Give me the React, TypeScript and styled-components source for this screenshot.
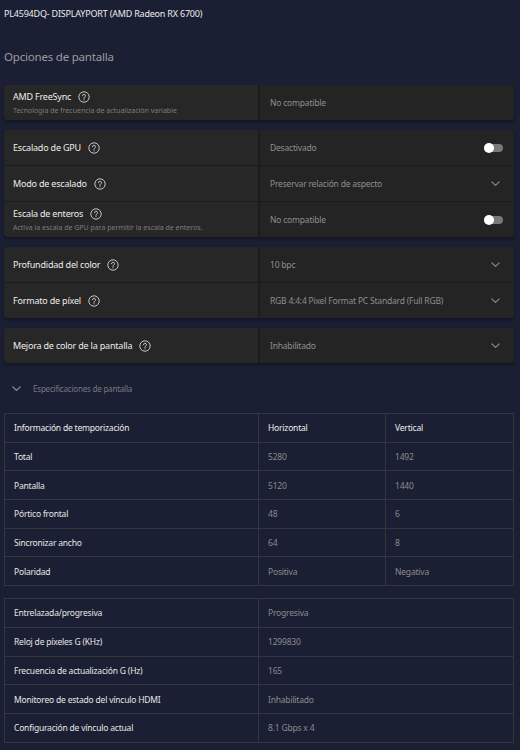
import React from 'react';
import styled, { createGlobalStyle } from 'styled-components';

const Global = createGlobalStyle`
	html, body {
		margin: 0;
		padding: 0;
		background: #1b1f33;
	}
	body {
		font-family: 'Noto Sans', 'Open Sans', sans-serif;
		letter-spacing: -0.2px;
		color: #e4e4e4;
	}
`;

const Page = styled.div`
	width: 520px;
	height: 750px;
	box-sizing: border-box;
	padding: 6px 6px 0 4px;
	background: #1b1f33;
	overflow: hidden;
`;
const Title = styled.h1`
	margin: 0;
	font-size: 9px;
	font-weight: 400;
	line-height: 16px;
	color: #ececec;
`;
const Heading = styled.h2`
	margin: 25px 0 0;
	font-size: 11.5px;
	font-weight: 400;
	line-height: 20px;
	color: #9b9b9f;
`;
const Card = styled.div<{ $top?: number }>`
	margin-top: ${({ $top }) => $top ?? 10}px;
	display: flex;
	flex-direction: column;
	gap: 1px;
	background: #1c1c1c;
	border-radius: 3px;
	overflow: hidden;
	box-shadow: 0 2px 3px rgba(0, 0, 0, 0.35);
`;
const Row = styled.div<{ $h?: number }>`
	display: grid;
	grid-template-columns: 254px 1fr;
	gap: 2px;
	height: ${({ $h }) => $h ?? 35}px;
`;
const Label = styled.div`
	display: flex;
	flex-direction: column;
	justify-content: center;
	padding-left: 9px;
	background: #272727;
	strong {
		display: flex;
		align-items: center;
		gap: 7px;
		font-size: 9px;
		font-weight: 400;
		color: #ececec;
		line-height: 14px;
	}
	small {
		margin-top: 2px;
		font-size: 7px;
		letter-spacing: 0;
		color: #7c7c7c;
		line-height: 9px;
	}
`;
const Value = styled.div`
	display: flex;
	align-items: center;
	justify-content: space-between;
	padding: 0 14px 0 10px;
	background: #242424;
	font-size: 8.5px;
	color: #8e8e8e;
`;
const Toggle = styled.span`
	position: relative;
	width: 19px;
	height: 8px;
	margin-right: -3px;
	border-radius: 4px;
	background: #7a7a7a;
	&:before {
		content: '';
		position: absolute;
		left: 0;
		top: -1px;
		width: 10px;
		height: 10px;
		border-radius: 50%;
		background: #ffffff;
	}
`;
const Help = () => (
	<svg width="12" height="12" viewBox="0 0 12 12" fill="none">
		<circle cx="6" cy="6" r="5.2" stroke="#d6d6d6" strokeWidth="0.9" />
		<path
			d="M4.5 4.7a1.5 1.5 0 1 1 2.1 1.4c-.4.2-.6.5-.6.9v.4"
			stroke="#d6d6d6"
			strokeWidth="0.9"
			strokeLinecap="round"
		/>
		<circle cx="6" cy="8.7" r="0.55" fill="#d6d6d6" />
	</svg>
);
const Chevron = ({ color = '#8e8e8e' }: { color?: string }) => (
	<svg width="9" height="5" viewBox="0 0 9 5" fill="none">
		<path d="M0.8 0.8l3.7 3.5 3.7-3.5" stroke={color} strokeWidth="1.1" strokeLinecap="round" strokeLinejoin="round" />
	</svg>
);
const Specs = styled.div`
	margin-top: 15px;
	display: flex;
	align-items: center;
	gap: 12px;
	padding-left: 8px;
	height: 20px;
	font-size: 8px;
	color: #77787f;
`;
const Table = styled.table<{ $top?: number }>`
	width: 100%;
	margin-top: ${({ $top }) => $top}px;
	border-collapse: collapse;
	td {
		height: 27.7px;
		padding: 0 0 0 9px;
		border: 1px solid #35363b;
		font-size: 8.5px;
		color: #8a8a8e;
	}
	td:first-child {
		color: #e6e6e6;
	}
	tr.head td {
		color: #ececec;
	}
`;

const timing = [
	['Total', '5280', '1492'],
	['Pantalla', '5120', '1440'],
	['Pórtico frontal', '48', '6'],
	['Sincronizar ancho', '64', '8'],
	['Polaridad', 'Positiva', 'Negativa'],
];
const links = [
	['Entrelazada/progresiva', 'Progresiva'],
	['Reloj de píxeles G (KHz)', '1299830'],
	['Frecuencia de actualización G (Hz)', '165'],
	['Monitoreo de estado del vínculo HDMI', 'Inhabilitado'],
	['Configuración de vínculo actual', '8.1 Gbps x 4'],
];

export default function App() {
	return (
		<Page>
			<Global />
			<Title>PL4594DQ- DISPLAYPORT (AMD Radeon RX 6700)</Title>
			<Heading>Opciones de pantalla</Heading>

			<Card $top={18}>
				<Row>
					<Label>
						<strong>AMD FreeSync <Help /></strong>
						<small>Tecnología de frecuencia de actualización variable</small>
					</Label>
					<Value>No compatible</Value>
				</Row>
			</Card>

			<Card>
				<Row>
					<Label>
						<strong>Escalado de GPU <Help /></strong>
					</Label>
					<Value>
						Desactivado <Toggle />
					</Value>
				</Row>
				<Row>
					<Label>
						<strong>Modo de escalado <Help /></strong>
					</Label>
					<Value>
						Preservar relación de aspecto <Chevron />
					</Value>
				</Row>
				<Row>
					<Label>
						<strong>Escala de enteros <Help /></strong>
						<small>Activa la escala de GPU para permitir la escala de enteros.</small>
					</Label>
					<Value>
						No compatible <Toggle />
					</Value>
				</Row>
			</Card>

			<Card>
				<Row>
					<Label>
						<strong>Profundidad del color <Help /></strong>
					</Label>
					<Value>
						10 bpc <Chevron />
					</Value>
				</Row>
				<Row>
					<Label>
						<strong>Formato de píxel <Help /></strong>
					</Label>
					<Value>
						RGB 4:4:4 Pixel Format PC Standard (Full RGB) <Chevron />
					</Value>
				</Row>
			</Card>

			<Card>
				<Row>
					<Label>
						<strong>Mejora de color de la pantalla <Help /></strong>
					</Label>
					<Value>
						Inhabilitado <Chevron />
					</Value>
				</Row>
			</Card>

			<Specs>
				<Chevron color="#9a9aa0" />
				Especificaciones de pantalla
			</Specs>

			<Table $top={15}>
				<colgroup>
					<col style={{ width: 254 }} />
					<col style={{ width: 127 }} />
					<col />
				</colgroup>
				<tbody>
					<tr className="head">
						<td>Información de temporización</td>
						<td>Horizontal</td>
						<td>Vertical</td>
					</tr>
					{timing.map((r) => (
						<tr key={r[0]}>
							<td>{r[0]}</td>
							<td>{r[1]}</td>
							<td>{r[2]}</td>
						</tr>
					))}
				</tbody>
			</Table>

			<Table $top={12}>
				<colgroup>
					<col style={{ width: 254 }} />
					<col />
				</colgroup>
				<tbody>
					{links.map((r) => (
						<tr key={r[0]}>
							<td>{r[0]}</td>
							<td>{r[1]}</td>
						</tr>
					))}
				</tbody>
			</Table>
		</Page>
	);
}
